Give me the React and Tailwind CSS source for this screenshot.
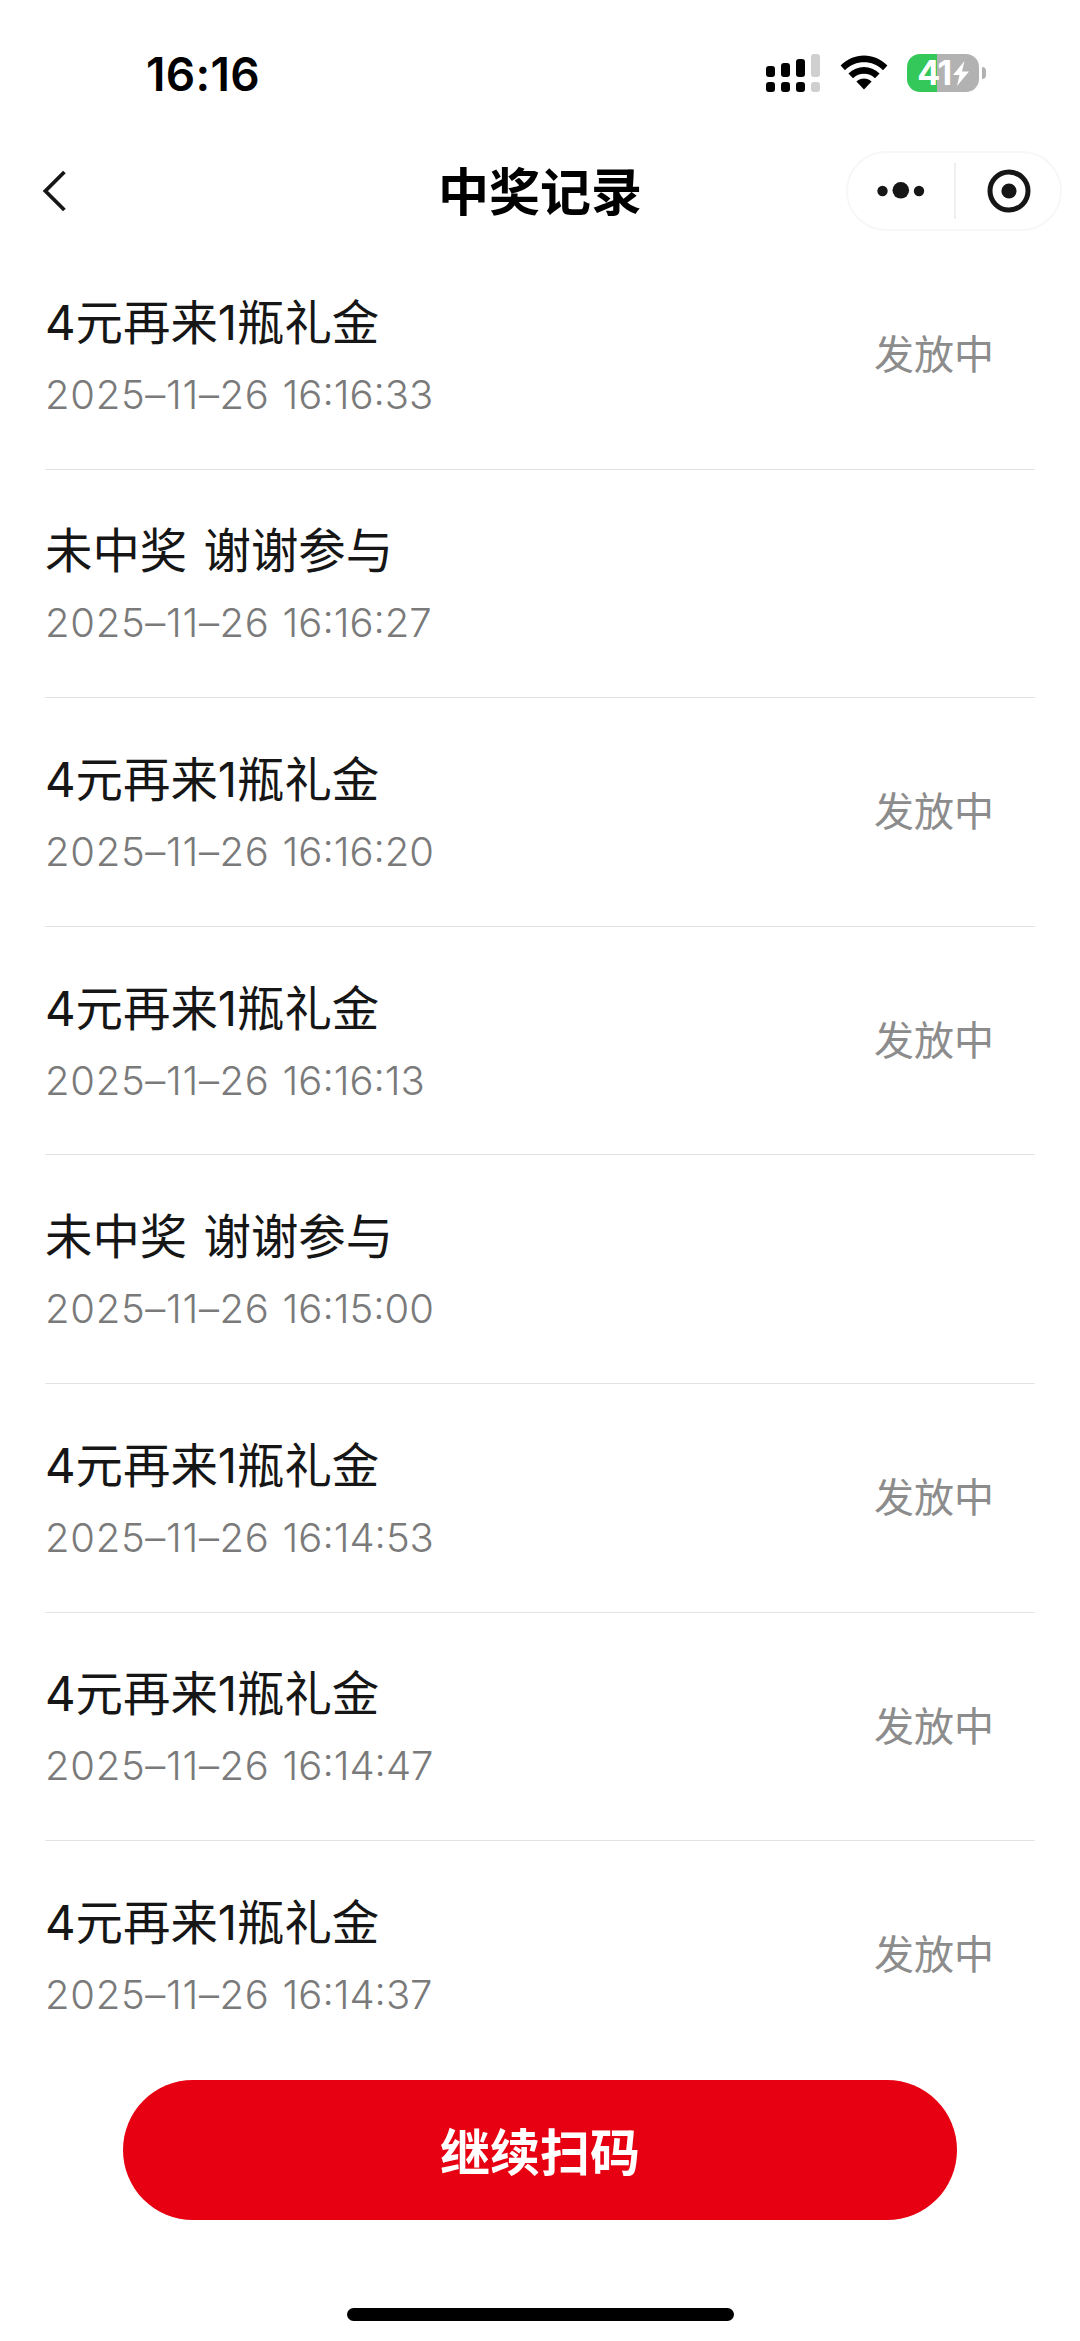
import React from 'react';

const PRIZE = '4元再来1瓶礼金';
const NO_PRIZE = '未中奖 谢谢参与';

const records = [
  { id: 1, title: PRIZE, date: '2025–11–26', time: '16:16:33', status: '发放中' },
  { id: 2, title: NO_PRIZE, date: '2025–11–26', time: '16:16:27' },
  { id: 3, title: PRIZE, date: '2025–11–26', time: '16:16:20', status: '发放中' },
  { id: 4, title: PRIZE, date: '2025–11–26', time: '16:16:13', status: '发放中' },
  { id: 5, title: NO_PRIZE, date: '2025–11–26', time: '16:15:00' },
  { id: 6, title: PRIZE, date: '2025–11–26', time: '16:14:53', status: '发放中' },
  { id: 7, title: PRIZE, date: '2025–11–26', time: '16:14:47', status: '发放中' },
  { id: 8, title: PRIZE, date: '2025–11–26', time: '16:14:37', status: '发放中' },
];

const SignalIcon = () => (
  <svg className="w-[54px] h-[38px]" viewBox="0 0 54 38">
    <rect x="0" y="12" width="9" height="11" rx="3" />
    <rect x="15" y="9" width="9" height="14" rx="3" />
    <rect x="30" y="5" width="9" height="18" rx="3" />
    <rect x="45" y="0" width="9" height="23" rx="3" fill="#cfcfcf" />
    <rect x="0" y="28" width="9" height="10" rx="3" />
    <rect x="15" y="28" width="9" height="10" rx="3" />
    <rect x="30" y="28" width="9" height="10" rx="3" />
    <rect x="45" y="28" width="9" height="10" rx="3" fill="#cfcfcf" />
  </svg>
);

const WifiIcon = () => (
  <svg className="w-[48px] h-[36px]" viewBox="0 0 48 36">
    <path d="M0.6 10.6 C13.5 -3 34.5 -3 47.4 10.6 L43 15.2 C32.5 4.6 15.5 4.6 5 15.2 Z" />
    <path d="M8.4 18.5 C17 9.8 31 9.8 39.6 18.5 L35 23.2 C29 17.4 19 17.4 13 23.2 Z" />
    <path d="M16.4 26.5 C20.8 22.6 27.2 22.6 31.6 26.5 L24 34.6 Z" />
  </svg>
);

const BatteryIcon = () => (
  <div className="flex items-center">
    <div className="flex h-[38px] w-[72px] items-center justify-center rounded-[13px] bg-linear-to-r from-[#34c759] from-[42%] to-[#b2b2b2] to-[42%]">
      <span className="text-[34px] leading-none font-bold tracking-[-1.5px] text-white">41</span>
      <svg className="ml-[2px] h-[25px] w-[16px]" viewBox="0 0 16 25" fill="#fff">
        <path d="M11.5 0 L0 14 H6.5 L4 25 L16 10.5 H9 Z" />
      </svg>
    </div>
    <div className="ml-[3px] h-[12px] w-[4px] rounded-r-full bg-[#b2b2b2]" />
  </div>
);

const StatusBar = () => (
  <div className="flex h-[146px] items-center justify-between pr-[94px] pl-[146px]">
    <span className="pt-px text-[46px] leading-none font-semibold tracking-[0.3px]">16:16</span>
    <div className="flex items-center">
      <SignalIcon />
      <div className="ml-[20px] mr-[19px]">
        <WifiIcon />
      </div>
      <BatteryIcon />
    </div>
  </div>
);

const NavBar = () => (
  <div className="grid h-[90px] grid-cols-3 items-center">
    <svg className="ml-[41px] h-[44px] w-[28px]" viewBox="0 0 28 44" fill="none" stroke="#161616" strokeWidth="3.8">
      <path d="M23.4 3 L4.4 22 L23.4 41" />
    </svg>
    <h1 className="pt-[3px] text-center text-[51px] leading-none font-bold text-black">中奖记录</h1>
    <div className="mr-[18px] flex h-[80px] w-[216px] items-center justify-self-end rounded-full border-2 border-[#f7f7f7]">
      <svg className="ml-[29px] h-[20px] w-[48px]" viewBox="0 0 48 20" fill="#161616">
        <circle cx="5.5" cy="10" r="5.2" />
        <circle cx="23.8" cy="9.3" r="8.3" />
        <circle cx="42" cy="10" r="5.2" />
      </svg>
      <div className="ml-[29px] h-[56px] w-[2px] bg-[#efefef]" />
      <svg className="ml-[31px] h-[44px] w-[44px]" viewBox="0 0 44 44">
        <circle cx="22" cy="22" r="19" fill="none" stroke="#161616" strokeWidth="5" />
        <circle cx="22" cy="22" r="7.6" fill="#161616" />
      </svg>
    </div>
  </div>
);

const RecordItem = ({ record }) => (
  <li className="flex h-[228.6px] items-center justify-between border-b border-[#e2e2e2] pr-[41px] last:border-transparent">
    <div className="pt-[8px]">
      <p className="text-[47.4px] leading-[72px] text-[#161616] [word-spacing:3px]">{record.title}</p>
      <p className="text-[40px] leading-[72px] font-[340] text-[#7a7a7a]">
        <span className="mr-px tracking-[0.7px]">{record.date} </span>
        {record.time}
      </p>
    </div>
    {record.status && <span className="pt-px text-[40px] leading-none text-[#8c8c8c]">{record.status}</span>}
  </li>
);

export default function App() {
  return (
    <div className="flex h-[2341px] w-[1080px] flex-col overflow-hidden bg-white font-['Inter','Noto_Sans_CJK_SC',sans-serif] text-black">
      <StatusBar />
      <NavBar />
      <ul className="mx-[45px] mt-[5px]">
        {records.map((record) => (
          <RecordItem key={record.id} record={record} />
        ))}
      </ul>
      <button className="mx-auto mt-[10px] h-[140px] w-[834px] shrink-0 rounded-full bg-[#e60012] pt-[7px] text-[50px] font-bold text-white">
        继续扫码
      </button>
      <div className="mx-auto mt-auto mb-[20px] h-[13px] w-[387px] shrink-0 rounded-full bg-black" />
    </div>
  );
}
